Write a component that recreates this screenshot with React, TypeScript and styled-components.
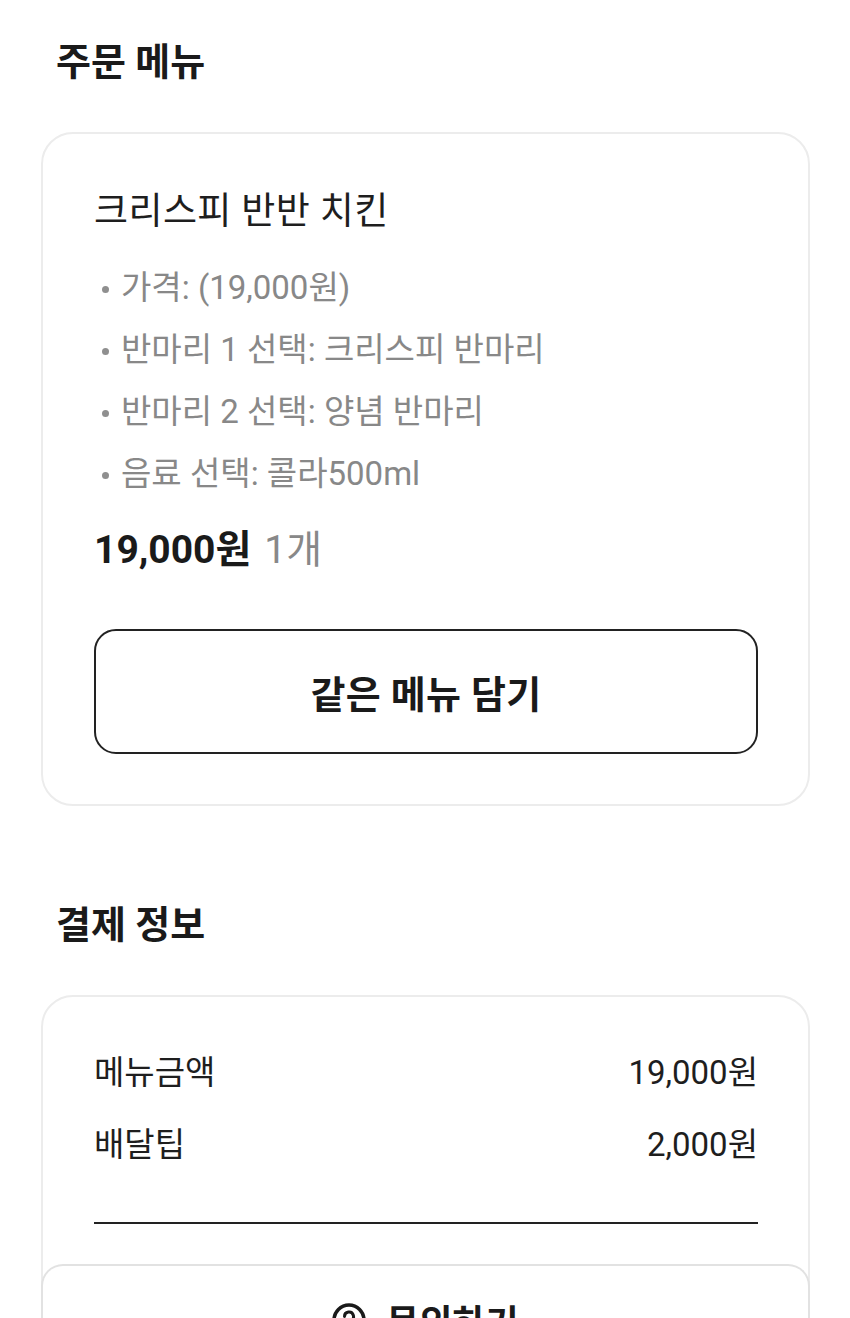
import React from "react";
import styled, { createGlobalStyle } from "styled-components";

const GlobalStyle = createGlobalStyle`
  html, body {
    margin: 0;
    padding: 0;
    background: #ffffff;
  }
  body {
    font-family: "Roboto", "Noto Sans CJK KR", "Noto Sans", sans-serif;
    color: #1c1c1c;
    -webkit-font-smoothing: antialiased;
  }
  * { box-sizing: border-box; }
`;

const Page = styled.main`
  display: flex;
  flex-direction: column;
  padding: 37px 40px 0 41px;
`;

const Section = styled.section<{ $gapTop?: number }>`
  display: flex;
  flex-direction: column;
  gap: 45px;
  margin-top: ${(p) => p.$gapTop ?? 0}px;
`;

const SectionTitle = styled.h2`
  margin: 0;
  padding-left: 15px;
  font-size: 38px;
  line-height: 50px;
  font-weight: 700;
  color: #1a1a1a;
`;

const Card = styled.div<{ $pb?: number; $pt?: number }>`
  display: flex;
  flex-direction: column;
  border: 2px solid #ececec;
  border-radius: 32px;
  background: #ffffff;
  padding: ${(p) => p.$pt ?? 54}px 50px ${(p) => p.$pb ?? 50}px 51px;
`;

const MenuName = styled.div`
  font-size: 37px;
  line-height: 48px;
  font-weight: 400;
  color: #1e1e1e;
  letter-spacing: 0.4px;
`;

const OptionList = styled.ul`
  list-style: none;
  margin: 21px 0 0;
  padding: 0;
  display: flex;
  flex-direction: column;
`;

const OptionItem = styled.li`
  display: flex;
  align-items: center;
  font-size: 33px;
  line-height: 62px;
  color: #888888;
`;

const Bullet = styled.span`
  width: 7px;
  height: 7px;
  border-radius: 50%;
  background: #8f8f8f;
  margin: 2px 12px 0 8px;
  flex: none;
`;

const PriceLine = styled.div`
  margin-top: 21px;
  display: flex;
  align-items: baseline;
  gap: 13px;
  font-size: 39px;
  line-height: 48px;
`;

const PriceStrong = styled.span`
  font-weight: 700;
  color: #1a1a1a;
`;

const Quantity = styled.span`
  font-weight: 400;
  color: #888888;
`;

const OutlineButton = styled.button`
  margin-top: 55px;
  height: 125px;
  width: 100%;
  border: 2px solid #222222;
  border-radius: 22px;
  background: #ffffff;
  font-family: inherit;
  font-size: 38px;
  font-weight: 700;
  letter-spacing: 0.3px;
  color: #1a1a1a;
  display: flex;
  align-items: center;
  justify-content: center;
  cursor: pointer;
`;

const PayRow = styled.div<{ $mt?: number }>`
  display: flex;
  justify-content: space-between;
  align-items: center;
  font-size: 33px;
  line-height: 48px;
  color: #1e1e1e;
  margin-top: ${(p) => p.$mt ?? 0}px;
`;

const Divider = styled.hr`
  margin: 53px 0 0;
  border: none;
  height: 2px;
  background: #222222;
`;

const BottomBar = styled.div`
  position: fixed;
  left: 41px;
  width: 769px;
  bottom: 0;
  height: 54px;
  overflow: hidden;
  background: #ffffff;
  border: 2px solid #e2e2e2;
  border-bottom: none;
  border-radius: 22px 22px 0 0;
  display: flex;
  justify-content: center;
  align-items: flex-start;
  padding-top: 30px;
`;

const InquiryButton = styled.button`
  display: flex;
  align-items: center;
  gap: 20px;
  height: 48px;
  border: none;
  background: transparent;
  padding: 0;
  font-family: inherit;
  font-size: 36px;
  font-weight: 700;
  color: #1a1a1a;
  cursor: pointer;
`;

const options = [
  "가격: (19,000원)",
  "반마리 1 선택: 크리스피 반마리",
  "반마리 2 선택: 양념 반마리",
  "음료 선택: 콜라500ml",
];

const InquiryIcon = () => (
  <svg width="34" height="34" viewBox="0 0 34 34" fill="none">
    <circle cx="17" cy="17" r="15" stroke="#1a1a1a" strokeWidth="3.5" />
    <path
      d="M12.5 13.5a4.5 4.5 0 1 1 6.4 4.1c-1.2.6-1.9 1.4-1.9 2.6v.8"
      stroke="#1a1a1a"
      strokeWidth="3"
      strokeLinecap="round"
    />
    <circle cx="17" cy="25" r="1.8" fill="#1a1a1a" />
  </svg>
);

export default function App() {
  return (
    <>
      <GlobalStyle />
      <Page>
        <Section>
          <SectionTitle>주문 메뉴</SectionTitle>
          <Card>
            <MenuName>크리스피 반반 치킨</MenuName>
            <OptionList>
              {options.map((o) => (
                <OptionItem key={o}>
                  <Bullet />
                  {o}
                </OptionItem>
              ))}
            </OptionList>
            <PriceLine>
              <PriceStrong>19,000원</PriceStrong>
              <Quantity>1개</Quantity>
            </PriceLine>
            <OutlineButton>같은 메뉴 담기</OutlineButton>
          </Card>
        </Section>

        <Section $gapTop={94}>
          <SectionTitle>결제 정보</SectionTitle>
          <Card $pt={52} $pb={160}>
            <PayRow>
              <span>메뉴금액</span>
              <span>19,000원</span>
            </PayRow>
            <PayRow $mt={24}>
              <span>배달팁</span>
              <span>2,000원</span>
            </PayRow>
            <Divider />
          </Card>
        </Section>
      </Page>
      <BottomBar>
        <InquiryButton>
          <InquiryIcon />
          문의하기
        </InquiryButton>
      </BottomBar>
    </>
  );
}
